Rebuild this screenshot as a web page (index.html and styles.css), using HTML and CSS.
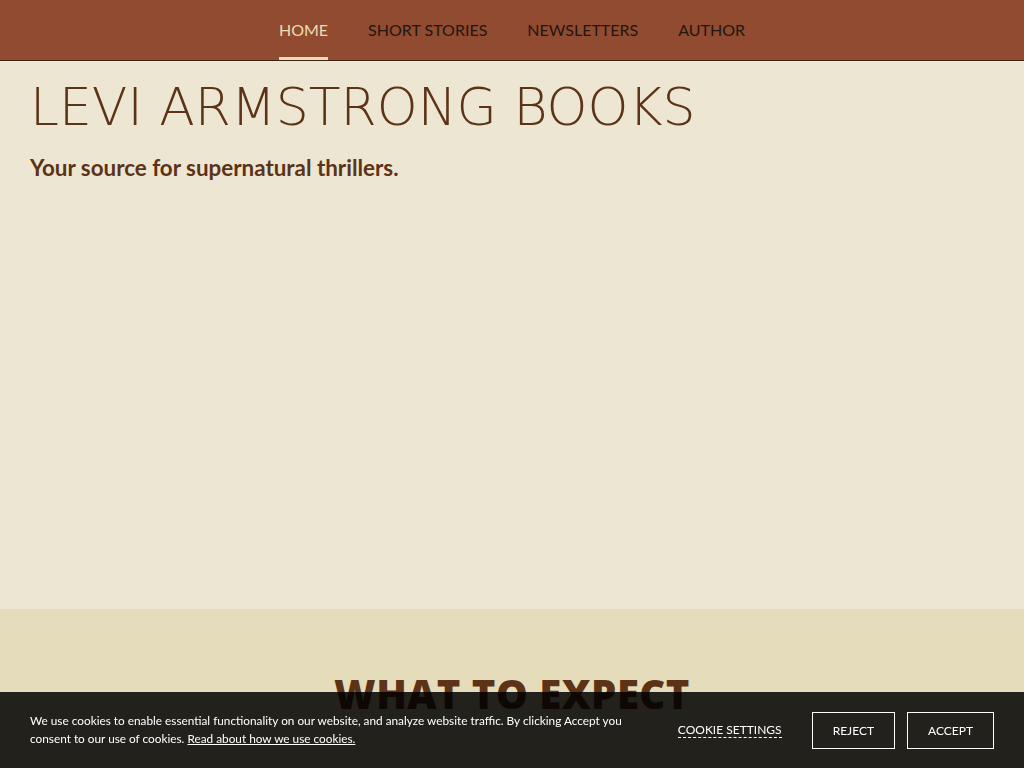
FILE: index.html
```html
<!DOCTYPE html>
<html lang="en">
  <head>
    <meta charset="UTF-8" />
    <meta name="viewport" content="width=device-width, initial-scale=1.0" />
    <title>Levi Armstrong Books</title>
    <link rel="stylesheet" href="styles.css">
  </head>
  <body>
    <header class="topnav">
      <nav class="menu">
        <a href="#" class="menu_item active">Home</a>
        <a href="#" class="menu_item">Short Stories</a>
        <a href="#" class="menu_item">Newsletters</a>
        <a href="#" class="menu_item">Author</a>
      </nav>
    </header>
    <section class="hero">
      <h1 class="title">Levi Armstrong Books</h1>
      <p class="tagline">Your source for supernatural thrillers.</p>
    </section>
    <section class="expect">
      <h2>What to expect</h2>
    </section>
    <div class="cookies">
      <p class="cookies_text">
        We use cookies to enable essential functionality on our website, and analyze website traffic. By clicking Accept you
        consent to our use of cookies. <a href="#">Read about how we use cookies.</a>
      </p>
      <div class="cookies_actions">
        <a href="#" class="cookies_settings">Cookie Settings</a>
        <button class="cookies_btn">Reject</button>
        <button class="cookies_btn">Accept</button>
      </div>
    </div>
  </body>
</html>
```

FILE: styles.css
```css
body {
  margin: 0;
  font-family: Lato, "Open Sans", sans-serif;
  background-color: #ece6d2;
  color: #5c3317;
}
.topnav {
  background-color: #904b31;
  border-bottom: 1px solid #3b2418;
  height: 60px;
}
.menu {
  display: flex;
  justify-content: center;
  gap: 40px;
  height: 100%;
}
.menu_item {
  display: flex;
  align-items: center;
  box-sizing: border-box;
  height: 60px;
  padding-top: 1px;
  font-size: 16px;
  text-transform: uppercase;
  text-decoration: none;
  color: #24160f;
  border-bottom: 3px solid transparent;
}
.menu_item.active {
  color: #ecdcb2;
  border-bottom-color: #ecdcb2;
}
.hero {
  height: 548px;
  padding: 0 30px;
  box-sizing: border-box;
}
.title {
  margin: 0;
  padding-top: 16px;
  font-family: "DejaVu Sans", sans-serif;
  font-weight: 200;
  font-size: 52px;
  line-height: 60px;
  letter-spacing: 0;
  text-transform: uppercase;
  color: #5c3317;
}
.tagline {
  margin: 17px 0 0;
  font-size: 22.4px;
  font-weight: 700;
  color: #5c3317;
}
.expect {
  background-color: #e5dcbb;
  padding-top: 62px;
  height: 300px;
  box-sizing: border-box;
  text-align: center;
}
.expect h2 {
  margin: 0;
  font-family: "Open Sans", sans-serif;
  font-weight: 800;
  font-size: 40px;
  line-height: 46px;
  letter-spacing: 0.5px;
  text-transform: uppercase;
  color: #5c3317;
}
.cookies {
  position: fixed;
  left: 0;
  right: 0;
  bottom: 0;
  height: 76px;
  box-sizing: border-box;
  padding: 0 30px;
  display: flex;
  align-items: center;
  justify-content: space-between;
  background-color: rgba(0, 0, 0, 0.85);
  color: #fff;
}
.cookies_text {
  margin: 0;
  width: 610px;
  font-size: 11.8px;
  line-height: 18px;
}
.cookies_text a {
  color: #fff;
}
.cookies_actions {
  display: flex;
  align-items: center;
  gap: 12px;
}
.cookies_settings {
  margin-right: 18px;
  font-size: 12px;
  color: #fff;
  text-transform: uppercase;
  text-decoration: none;
  border-bottom: 1px dashed #fff;
}
.cookies_btn {
  height: 37px;
  padding: 0 20px;
  font-family: Lato, sans-serif;
  font-size: 12px;
  text-transform: uppercase;
  color: #fff;
  background: transparent;
  border: 1px solid #fff;
  border-radius: 0;
}
```
